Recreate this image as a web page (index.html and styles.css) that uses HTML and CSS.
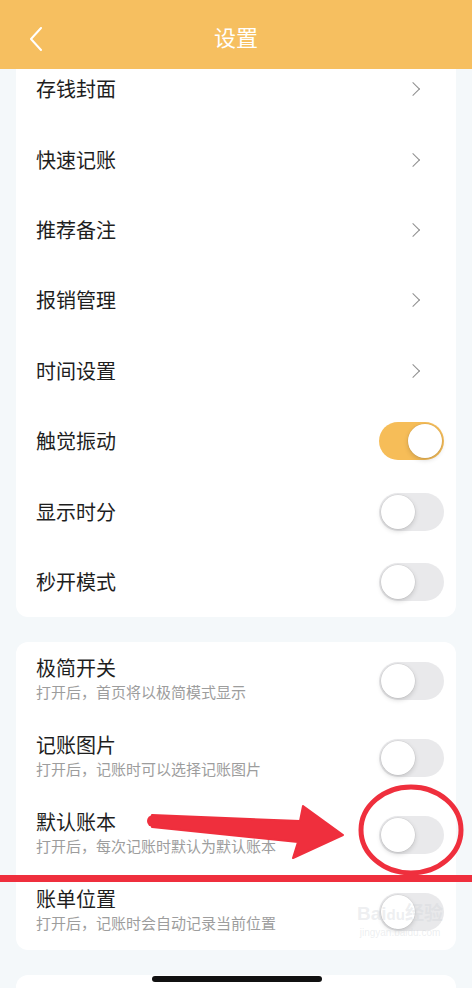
FILE: index.html
```html
<!DOCTYPE html>
<html lang="zh-CN">
<head>
    <meta charset="UTF-8">
    <meta name="viewport" content="width=device-width, initial-scale=1.0">
    <title>设置</title>
    <link rel="stylesheet" href="styles.css">
</head>
<body>
    <div class="page">
        <header class="topbar">
            <svg class="back" width="14" height="24" viewBox="0 0 14 24">
                <path d="M12 1 L2 12 L12 23" fill="none" stroke="#fff" stroke-width="2" stroke-linecap="round" stroke-linejoin="round"/>
            </svg>
            <h1>设置</h1>
        </header>

        <main class="list">
            <section class="card">
                <div class="row"><span class="title">存钱封面</span><span class="chev"></span></div>
                <div class="row"><span class="title">快速记账</span><span class="chev"></span></div>
                <div class="row"><span class="title">推荐备注</span><span class="chev"></span></div>
                <div class="row"><span class="title">报销管理</span><span class="chev"></span></div>
                <div class="row"><span class="title">时间设置</span><span class="chev"></span></div>
                <div class="row"><span class="title">触觉振动</span><span class="switch on"></span></div>
                <div class="row"><span class="title">显示时分</span><span class="switch"></span></div>
                <div class="row"><span class="title">秒开模式</span><span class="switch"></span></div>
            </section>

            <section class="card">
                <div class="row tall">
                    <div class="text"><span class="title">极简开关</span><span class="sub">打开后，首页将以极简模式显示</span></div>
                    <span class="switch"></span>
                </div>
                <div class="row tall">
                    <div class="text"><span class="title">记账图片</span><span class="sub">打开后，记账时可以选择记账图片</span></div>
                    <span class="switch"></span>
                </div>
                <div class="row tall">
                    <div class="text"><span class="title">默认账本</span><span class="sub">打开后，每次记账时默认为默认账本</span></div>
                    <span class="switch"></span>
                </div>
                <div class="row tall">
                    <div class="text"><span class="title">账单位置</span><span class="sub">打开后，记账时会自动记录当前位置</span></div>
                    <span class="switch"></span>
                </div>
            </section>

            <section class="card last"></section>
        </main>

        <div class="home-bar"></div>

        <div class="watermark">
            <span class="wm-logo">Bai<b>du</b>经验</span>
            <span class="wm-url">jingyan.baidu.com</span>
        </div>

        <!-- red marks drawn on top of the screenshot -->
        <svg class="marks" width="472" height="988" viewBox="0 0 472 988">
            <polygon points="152,815 300,821 303,806 343,835 293,858 298,842 152,827" fill="#ef2f3d" stroke="#ef2f3d" stroke-width="2" stroke-linejoin="round"/>
            <circle cx="153" cy="821" r="6" fill="#ef2f3d"/>
            <ellipse cx="411" cy="830" rx="50" ry="43" fill="none" stroke="#ef2f3d" stroke-width="5"/>
            <rect x="0" y="875" width="472" height="7" fill="#ef2f3d"/>
        </svg>
    </div>
</body>
</html>
```

FILE: styles.css
```css
body {
    margin: 0;
    font-family: "Noto Sans CJK SC", "Noto Sans", sans-serif;
    background-color: #f4f8fa;
    color: #222;
}
.page {
    position: relative;
    width: 472px;
    height: 988px;
    overflow: hidden;
}
.topbar {
    position: relative;
    z-index: 2;
    height: 69px;
    background-color: #f6bf60;
    display: flex;
    align-items: center;
    justify-content: center;
}
.topbar h1 {
    margin: 2px 0 0;
    font-size: 22px;
    font-weight: 400;
    color: #fff;
    line-height: 30px;
}
.back {
    position: absolute;
    left: 29px;
    top: 27px;
}
.list {
    margin-top: -15px;
    padding: 0 16px;
    display: flex;
    flex-direction: column;
    gap: 25px;
}
.card {
    background: #fff;
    border-radius: 12px;
    padding: 0 12px 0 20px;
}
.card.last {
    height: 60px;
}
.row {
    height: 70.4px;
    display: flex;
    align-items: center;
    justify-content: space-between;
}
.row.tall {
    height: 77px;
}
.title {
    font-size: 20px;
    line-height: 26px;
    color: #1e1e1e;
}
.text {
    display: flex;
    flex-direction: column;
    padding-bottom: 3px;
}
.sub {
    font-size: 15px;
    line-height: 22px;
    color: #9d9d9d;
}
.chev {
    width: 9px;
    height: 9px;
    border-top: 1.5px solid #8e8e8e;
    border-right: 1.5px solid #8e8e8e;
    transform: rotate(45deg);
    margin-right: 26px;
}
.switch {
    position: relative;
    width: 65px;
    height: 38px;
    border-radius: 19px;
    background: #e9e9eb;
    flex-shrink: 0;
}
.switch::after {
    content: "";
    position: absolute;
    top: 2px;
    left: 2px;
    width: 34px;
    height: 34px;
    border-radius: 50%;
    background: #fff;
    box-shadow: 0 2px 5px rgba(0, 0, 0, 0.16), 0 0 0 0.5px rgba(0, 0, 0, 0.08);
}
.switch.on {
    background: #f6bd58;
}
.switch.on::after {
    left: 29px;
}
.home-bar {
    position: absolute;
    left: 152px;
    top: 976px;
    width: 170px;
    height: 6px;
    border-radius: 3px;
    background: #111;
}
.watermark {
    position: absolute;
    left: 354px;
    top: 902px;
    width: 92px;
    display: flex;
    flex-direction: column;
    align-items: center;
    color: rgba(210, 214, 218, 0.4);
    font-family: "Liberation Sans", "Noto Sans CJK SC", sans-serif;
}
.wm-logo {
    font-size: 19px;
    font-weight: 700;
    line-height: 24px;
}
.wm-logo b {
    font-size: 15px;
}
.wm-url {
    font-size: 10px;
    line-height: 12px;
}
.marks {
    position: absolute;
    left: 0;
    top: 0;
    z-index: 3;
    pointer-events: none;
}
```
